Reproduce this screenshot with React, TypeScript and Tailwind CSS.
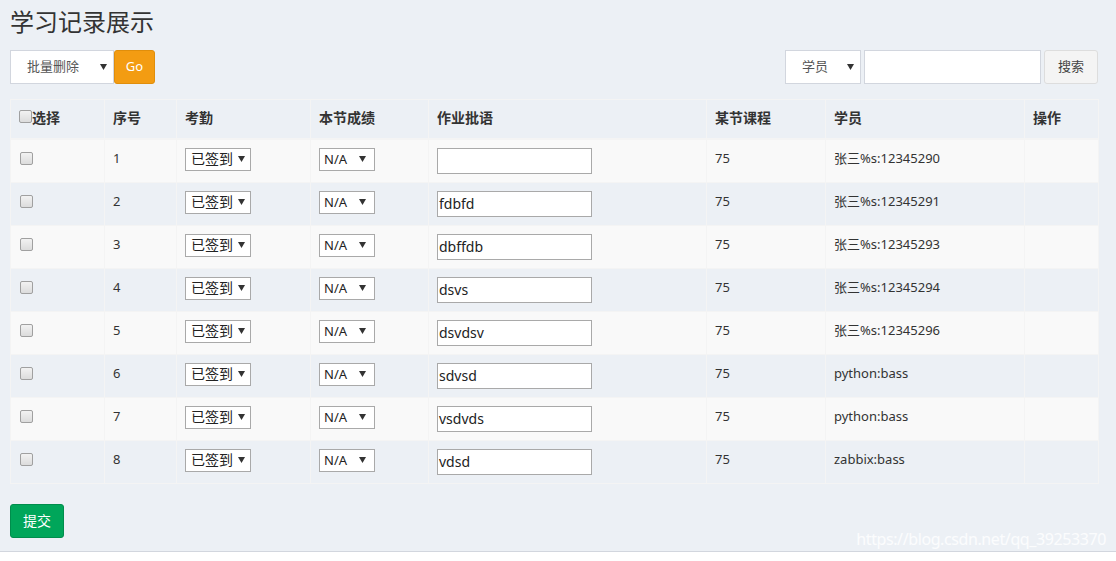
import React from 'react';

const rows = [
  { n: 1, note: '', stu: '张三%s:12345290' },
  { n: 2, note: 'fdbfd', stu: '张三%s:12345291' },
  { n: 3, note: 'dbffdb', stu: '张三%s:12345293' },
  { n: 4, note: 'dsvs', stu: '张三%s:12345294' },
  { n: 5, note: 'dsvdsv', stu: '张三%s:12345296' },
  { n: 6, note: 'sdvsd', stu: 'python:bass' },
  { n: 7, note: 'vsdvds', stu: 'python:bass' },
  { n: 8, note: 'vdsd', stu: 'zabbix:bass' },
];

const font = { fontFamily: '"Noto Sans", "Noto Sans CJK SC", sans-serif' };

function Arrow({ right = 7 }: { right?: number }) {
  return (
    <svg
      width="7"
      height="6"
      viewBox="0 0 7 6"
      className="pointer-events-none absolute top-1/2 -translate-y-1/2"
      style={{ right }}
    >
      <path d="M0 0H7L3.5 6Z" fill="#333" />
    </svg>
  );
}

function Box({ className = '' }: { className?: string }) {
  return <span className={'inline-block h-[13px] w-[13px] rounded-[2px] border border-[#a0a0a0] bg-gradient-to-b from-[#f2f2f2] to-[#dcdcdc] ' + className} />;
}

export default function App() {
  const th = 'border border-[#f4f4f4] border-b-2 px-2 py-2 text-left align-top font-bold text-[14px] text-[#333] leading-[20px]';
  const td = 'border border-[#f4f4f4] px-2 py-2 align-top text-[13px] text-[#333] leading-[20px]';

  return (
    <div style={font} className="min-h-[561px] bg-white">
      <div className="relative h-[552px] border-b border-[#d2d6de] bg-[#ecf0f5] px-[10px]">
        <h1 className="pt-[4px] text-[24px] leading-[36px] text-[#333]">学习记录展示</h1>

        <div className="mt-[10px] flex items-center justify-between">
          <div className="flex items-center">
            <div className="relative h-[34px] w-[104px] border border-[#d2d6de] bg-white">
              <span className="absolute left-[16px] top-1/2 -translate-y-1/2 text-[13px] text-[#555]">批量删除</span>
              <Arrow right={6} />
            </div>
            <button className="h-[34px] w-[41px] rounded-[3px] border border-[#e08e0b] bg-[#f39c12] text-[13px] text-white">Go</button>
          </div>
          <div className="flex items-center pr-[8px]">
            <div className="relative h-[34px] w-[76px] border border-[#d2d6de] bg-white">
              <span className="absolute left-[16px] top-1/2 -translate-y-1/2 text-[13px] text-[#555]">学员</span>
              <Arrow right={6} />
            </div>
            <div className="ml-[3px] h-[34px] w-[177px] border border-[#d2d6de] bg-white" />
            <button className="ml-[3px] h-[34px] w-[54px] rounded-[3px] border border-[#ddd] bg-[#f4f4f4] text-[13px] text-[#444]">搜索</button>
          </div>
        </div>

        <table className="mt-[15px] w-[1088px] table-fixed border-collapse">
          <colgroup>
            <col className="w-[94px]" />
            <col className="w-[72px]" />
            <col className="w-[134px]" />
            <col className="w-[118px]" />
            <col className="w-[278px]" />
            <col className="w-[119px]" />
            <col className="w-[199px]" />
            <col className="w-[74px]" />
          </colgroup>
          <thead>
            <tr className="h-[39px]">
              <th className={th}>
                <span className="flex items-center"><Box className="mt-[-3px]" /><span>选择</span></span>
              </th>
              <th className={th}>序号</th>
              <th className={th}>考勤</th>
              <th className={th}>本节成绩</th>
              <th className={th}>作业批语</th>
              <th className={th}>某节课程</th>
              <th className={th}>学员</th>
              <th className={th}>操作</th>
            </tr>
          </thead>
          <tbody>
            {rows.map((r, i) => (
              <tr key={r.n} className={'h-[43px] ' + (i % 2 === 0 ? 'bg-[#f9f9f9]' : 'bg-[#ecf0f5]')}>
                <td className={td}><Box className="mt-[4px] ml-[1px] block" /></td>
                <td className={td}>{r.n}</td>
                <td className={td}>
                  <div className="relative h-[23px] w-[66px] border border-[#a9a9a9] bg-white">
                    <span className="absolute left-[5px] top-1/2 -translate-y-1/2 text-[14px] text-[#222]">已签到</span>
                    <Arrow right={5} />
                  </div>
                </td>
                <td className={td}>
                  <div className="relative h-[23px] w-[56px] border border-[#a9a9a9] bg-white">
                    <span className="absolute left-[4px] top-1/2 -translate-y-1/2 text-[13px] text-[#222]">N/A</span>
                    <Arrow right={8} />
                  </div>
                </td>
                <td className={td}>
                  <div className="flex h-[26px] w-[155px] items-center border border-[#a9a9a9] bg-white px-[1px] text-[14px] text-[#222]">{r.note}</div>
                </td>
                <td className={td}>75</td>
                <td className={td}>{r.stu}</td>
                <td className={td}></td>
              </tr>
            ))}
          </tbody>
        </table>

        <button className="mt-[20px] h-[34px] w-[54px] rounded-[3px] border border-[#008d4c] bg-[#00a65a] text-[14px] text-white">提交</button>

        <span className="absolute right-[10px] bottom-[2px] text-[16px] leading-[20px] tracking-tight text-white/80">https://blog.csdn.net/qq_39253370</span>
      </div>
    </div>
  );
}
